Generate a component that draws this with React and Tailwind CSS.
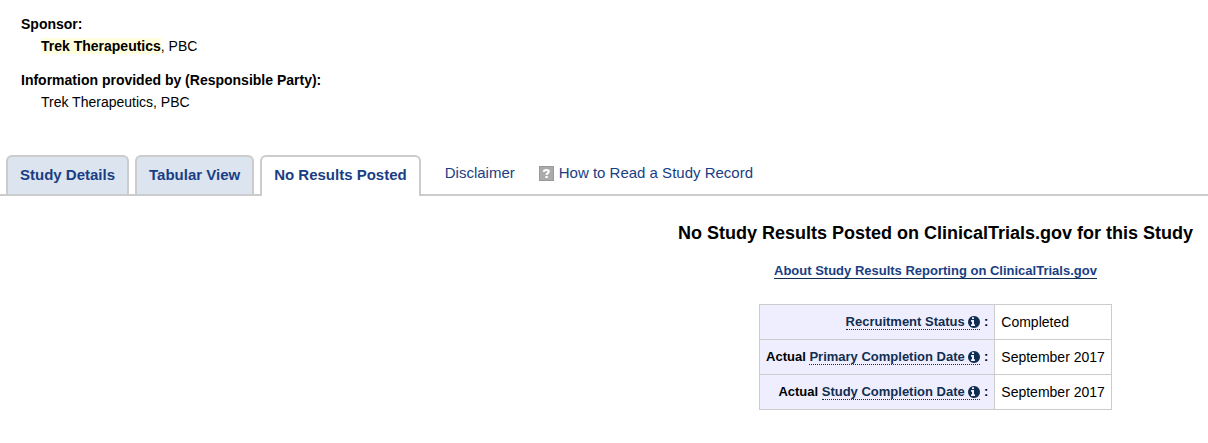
const tabs = [
  { label: "Study Details", active: false },
  { label: "Tabular View", active: false },
  { label: "No Results Posted", active: true },
];

const rows = [
  { prefix: "", term: "Recruitment Status", value: "Completed" },
  { prefix: "Actual ", term: "Primary Completion Date", value: "September 2017" },
  { prefix: "Actual ", term: "Study Completion Date", value: "September 2017" },
];

function InfoIcon() {
  return (
    <svg
      className="inline-block h-3 w-3 align-[-2px]"
      viewBox="128 128 1536 1536"
      fill="currentColor"
      aria-hidden="true"
    >
      <path d="M1024 1376v-160q0-14-9-23t-23-9h-96v-512q0-14-9-23t-23-9h-320q-14 0-23 9t-9 23v160q0 14 9 23t23 9h96v320h-96q-14 0-23 9t-9 23v160q0 14 9 23t23 9h448q14 0 23-9t9-23zM896 480v-160q0-14-9-23t-23-9h-192q-14 0-23 9t-9 23v160q0 14 9 23t23 9h192q14 0 23-9t9-23zM1664 896q0 209-103 385.5t-279.5 279.5-385.5 103-385.5-103-279.5-279.5-103-385.5 103-385.5 279.5-279.5 385.5-103 385.5 103 279.5 279.5 103 385.5z" />
    </svg>
  );
}

function Sponsor() {
  return (
    <dl className="px-[21px] pt-[13px] text-sm leading-[22px]">
      <dt className="font-bold">Sponsor:</dt>
      <dd className="mb-3 pl-5">
        <mark className="bg-[#ffffdd] font-bold text-black">Trek Therapeutics</mark>, PBC
      </dd>
      <dt className="font-bold">Information provided by (Responsible Party):</dt>
      <dd className="pl-5">Trek Therapeutics, PBC</dd>
    </dl>
  );
}

function TabBar() {
  return (
    <nav className="mt-[42px] flex border-b-2 border-[#cccccc] pl-[6px] text-[15px] text-[#1a3e83]">
      <div className="flex gap-[6px]">
        {tabs.map((tab) => (
          <a
            key={tab.label}
            href="#"
            aria-current={tab.active ? "page" : undefined}
            className={
              tab.active
                ? "-mb-[2px] h-[41px] rounded-t-md border-2 border-b-0 border-[#cccccc] bg-white px-3 pt-2 leading-5 font-bold"
                : "h-[39px] rounded-t-md border-2 border-b-0 border-[#cccccc] bg-[#dce4f0] px-3 pt-2 leading-5 font-bold"
            }
          >
            {tab.label}
          </a>
        ))}
      </div>
      <a href="#" className="ml-6 pt-2 leading-5">
        Disclaimer
      </a>
      <a href="#" className="ml-6 flex gap-[5px] pt-2 leading-5">
        <svg className="mt-[3px] h-[15px] w-[15px]" viewBox="0 0 15 15" aria-hidden="true">
          <rect x="0.5" y="0.5" width="14" height="14" fill="#ababab" stroke="#999999" />
          <path
            d="M4.8 5.8 C4.9 4.4 5.9 4 7.4 4 C9 4 9.8 4.6 9.8 5.6 C9.8 7.1 7.6 7 7.6 8.9"
            fill="none"
            stroke="#ffffff"
            strokeWidth="2.2"
          />
          <rect x="6.4" y="10" width="2.4" height="2" fill="#ffffff" />
        </svg>
        How to Read a Study Record
      </a>
    </nav>
  );
}

function Results() {
  return (
    <main className="flex justify-end pt-[26px] pr-[15px] pb-8">
      <div className="flex flex-col items-center">
        <h1 className="text-lg leading-[22px] font-bold">
          No Study Results Posted on ClinicalTrials.gov for this Study
        </h1>
        <a
          href="#"
          className="mt-5 border-b border-[#112e51] text-[13px] leading-[14px] font-bold text-[#1a3e83]"
        >
          About Study Results Reporting on ClinicalTrials.gov
        </a>
        <table className="mt-[25px] border-collapse text-sm">
          <tbody>
            {rows.map((row) => (
              <tr key={row.term} className="h-[35px]">
                <th
                  scope="row"
                  className="border border-[#cccccc] bg-[#eeeeff] px-[6px] text-right text-[13px] leading-4 font-bold"
                >
                  {row.prefix}
                  <a href="#" className="border-b border-dotted border-[#112e51] text-[#112e51]">
                    {row.term} <InfoIcon />
                  </a>
                  {" :"}
                </th>
                <td className="border border-[#cccccc] px-[6px] leading-4">{row.value}</td>
              </tr>
            ))}
          </tbody>
        </table>
      </div>
    </main>
  );
}

export default function App() {
  return (
    <div className="bg-white font-['Liberation_Sans',Arial,sans-serif] text-black">
      <Sponsor />
      <TabBar />
      <Results />
    </div>
  );
}
